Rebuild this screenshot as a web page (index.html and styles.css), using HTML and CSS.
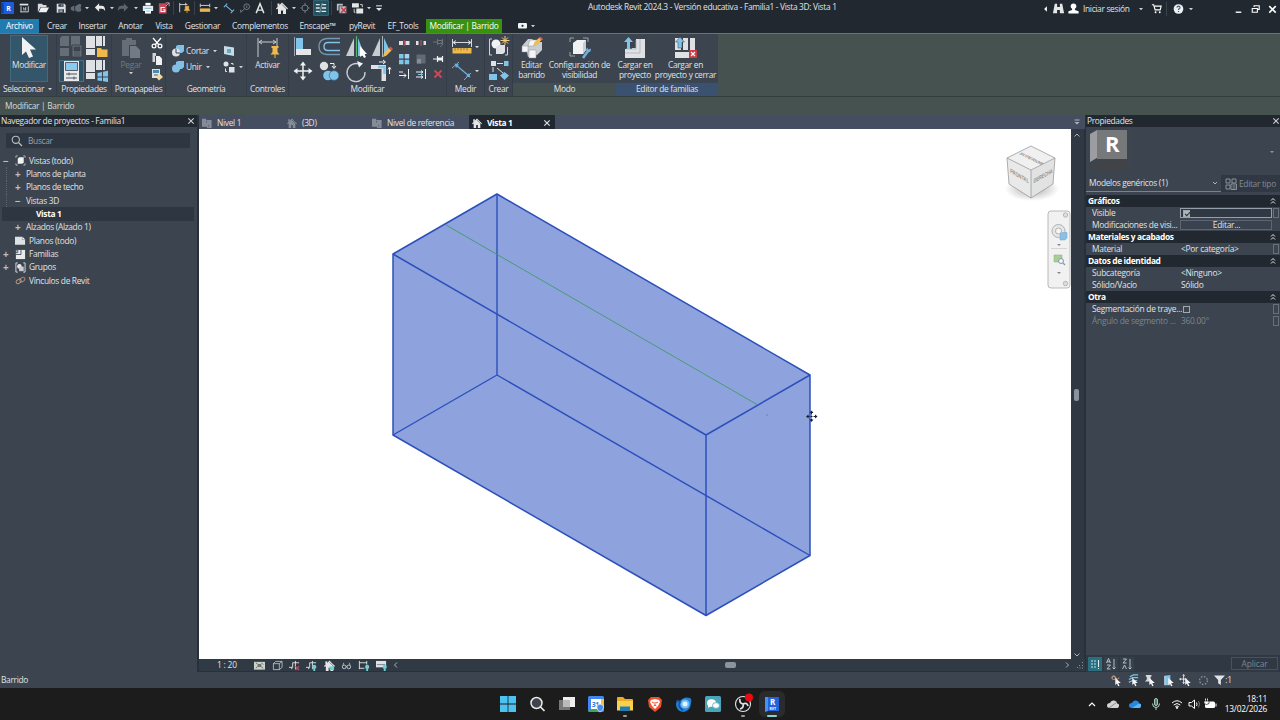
FILE: index.html
```html
<!DOCTYPE html>
<html lang="es">
<head>
    <meta charset="UTF-8">
    <title>Autodesk Revit 2024.3 - Familia1</title>
    <link rel="stylesheet" href="styles.css">
</head>
<body>
    <!-- Símbolos reutilizados -->
    <svg class="defs">
        <symbol id="caret" viewBox="0 0 6 4"><path d="M1 1h4L3 3.3z" fill="currentColor"/></symbol>
        <symbol id="house" viewBox="0 0 12 12"><path d="M0 6.500 6 .5l6 6-1 1-1-1V12H7V8.500H5V12H2V6.500l-1 1z" fill="currentColor"/><path d="M1.500 1.500h2v3h-2z" fill="currentColor"/><path d="M6 2.500l4.500 4.500M8.500 2.500l2 2" stroke="#303844" stroke-width=".6" fill="none"/></symbol>
        <symbol id="plan" viewBox="0 0 12 12"><path d="M0 1h5v1.500h6.500V12H6v-1.500H0z" fill="currentColor"/><path d="M5.500 3v3M8 8v3" stroke="#454d60" stroke-width=".6"/></symbol>
        <symbol id="close" viewBox="0 0 8 8"><path d="M1.300 1.300l5.400 5.400M6.700 1.300 1.300 6.700" stroke="currentColor" stroke-width="1.100"/></symbol>
        <symbol id="cursor" viewBox="0 0 10 14"><path d="M1 0v11l2.600-2.400L5.500 13l2-.9-1.900-4.200H9.500z" fill="#f4f6f8"/></symbol>
        <symbol id="dbl" viewBox="0 0 6 8"><path d="M1 3.500 3 1.500l2 2M1 6.500l2-2 2 2" fill="none" stroke="#e4e7ea"/></symbol>
        <symbol id="cam" viewBox="0 0 12 12"><path d="M1 3V1h2M9 1h2v2M11 9v2H9M3 11H1V9" fill="none" stroke="#cfd4da" stroke-width=".8"/><path d="M3 4l1.500-1.500H9.500V8L8 9.500H3z" fill="#f0f2f4"/></symbol>
    </svg>

    <header class="titlebar">
        <div class="qat">
            <svg viewBox="0 0 14 14"><rect x="-1" y="0" width="15" height="14" rx="1" fill="#1b5ce0"/><path d="M-1 1h3v12h-3z" fill="#0c3fa8"/><text x="5" y="10.500" class="logo-r">R</text></svg>
            <svg viewBox="0 0 14 14"><path d="M2 2h10v2H2z" fill="#e4e6e8"/><path d="M3.500 5v7M3 11.500h9V5M6 7h1v3M9 6v4" fill="none" stroke="#d5d8dc" stroke-width="1.100"/></svg>
            <svg viewBox="0 0 14 14"><path d="M1 12V2h5l1 1.500h4V6H4z" fill="#d8dadd"/><path d="M4.500 6.500H14L11 12H2z" fill="#f0f1f3"/></svg>
            <svg viewBox="0 0 14 14"><path d="M2 2h9l1.500 1.500V12.500H2z" fill="#dddfe2"/><path d="M4 2.500h6v3H4zM4 8.500h6.500v4H4z" fill="#303842"/><path d="M5 9.500h4M5 11h4M8 3v2" stroke="#dddfe2" stroke-width=".8"/></svg>
            <svg viewBox="0 0 14 14" fill="#626a73"><path d="M1 6l4-2v7l-4-2zM6 5l5-3 2 1v3l-3 2v4l-4-2z"/><circle cx="11" cy="9" r="2.300"/></svg>
            <svg class="caret"><use href="#caret"/></svg>
            <svg viewBox="0 0 14 14"><path d="M1 6.500l5-5v3h3q4 0 4 6-1.500-2.500-4-2.500H6v3.500z" fill="#e8eaec"/></svg>
            <svg class="caret"><use href="#caret"/></svg>
            <svg viewBox="0 0 14 14"><path d="M13 6.500 8 1.500v3H5q-4 0-4 6Q2.500 8 5 8h3v3.500z" fill="#5c646c"/></svg>
            <svg class="caret"><use href="#caret"/></svg>
            <svg viewBox="0 0 14 14"><path d="M4 1h6v3H4z" fill="#fff"/><path d="M1 4.500h12v6H1z" fill="#e8ebee"/><path d="M3.500 8h7v5.500h-7z" fill="#fff"/><path d="M3 7.500h8M5 10.500h4" stroke="#6fb2d8"/></svg>
            <svg viewBox="0 0 14 14"><path d="M1 1.500h9v12H1z" fill="#c8495a"/><path d="M9 1h4v4M13 1 9 5" stroke="#e8a0aa" fill="none"/><path d="M8 6.500H3.500v4.500H8V9H6" fill="none" stroke="#fff" stroke-width="1.200"/></svg>
            <i class="sep"></i>
            <svg viewBox="0 0 14 14"><path d="M2 1v11M2 3h9M9 1v3" stroke="#dfe2e5" fill="none"/><path d="M8.500 5h4v3l1 2h-6l1-2zM10.500 10v3" fill="#e8b24c" stroke="#e8b24c" stroke-width=".8"/></svg>
            <i class="sep"></i>
            <svg viewBox="0 0 14 14"><path d="M1.500 2v4M12.500 2v4M2 4h10" stroke="#e4e6e8" fill="none"/><path d="M1 7.500h12v4H1z" fill="#e8b64a"/></svg>
            <svg class="caret"><use href="#caret"/></svg>
            <svg viewBox="0 0 14 14"><path d="M3 4l8 7M1 6l4-4M9 13l4-4" stroke="#79b8dd" fill="none" stroke-width="1.200"/></svg>
            <svg viewBox="0 0 14 14"><circle cx="9" cy="5.500" r="3.300" stroke="#7f868e" fill="none"/><path d="M9 4v3M6.500 8 2 12v-3" stroke="#7f868e" fill="none"/></svg>
            <svg viewBox="0 0 14 14"><path d="M2.500 13 7 2l4.500 11M4 9.500h6" stroke="#e4e6e8" stroke-width="1.700" fill="none"/></svg>
            <i class="sep"></i>
            <svg viewBox="0 0 12 12" class="light"><use href="#house"/></svg>
            <svg class="caret"><use href="#caret"/></svg>
            <svg viewBox="0 0 14 14"><circle cx="7" cy="7" r="3.500" stroke="#7f868e" fill="none"/><path d="M7 1v3M7 10v3M1.500 7h2M10.500 7h2" stroke="#7f868e"/></svg>
            <svg viewBox="0 0 14 14"><rect x="-1.500" y="-1.500" width="17" height="17" fill="#24505e" stroke="#3c8294" stroke-width=".8"/><path d="M1 3h4.500M1 7h4.500M1 11h4.500M8.500 3H13M8 7h5M7.500 11H13" stroke="#e2e8ea" stroke-width="1.500"/><path d="M5.500 13 8.500 1" stroke="#aeb8bd" stroke-width=".8"/></svg>
            <i class="sep"></i>
            <svg viewBox="0 0 14 14"><path d="M1 2h7v2H3v6H1zM4 5h8v8H4z" fill="#b8bdc2"/><path d="M6 6.500l6 6M12 6.500l-6 6" stroke="#c8394a" stroke-width="1.800"/></svg>
            <svg viewBox="0 0 14 14"><path d="M0 1.500h8v5H0zM5 7.500h8v6H5z" fill="#e4e6e8"/><path d="M9.500 3H12v3M2.500 8v4H4" stroke="#e4e6e8" fill="none"/></svg>
            <svg class="caret"><use href="#caret"/></svg>
            <svg viewBox="0 0 14 14"><path d="M3.500 4.500h7" stroke="#e4e6e8" stroke-width="1.200"/><path d="M3.500 7h7L7 10.500z" fill="#e4e6e8"/></svg>
        </div>
        <div class="app-title">Autodesk Revit 2024.3 - Versión educativa - Familia1 - Vista 3D: Vista 1</div>
        <div class="account">
            <svg viewBox="0 0 14 14"><path d="M8.500 4.500v6l-3-3z" fill="#fff"/></svg>
            <svg viewBox="0 0 14 14"><path d="M3 2h2.500v3.500h3V2H11l2 10H8.500V8.500h-3V12H1z" fill="#e4e6e8"/></svg>
            <svg viewBox="0 0 14 14"><circle cx="7" cy="4.500" r="3" fill="#fff"/><path d="M5.500 6h3v2.500l4 1.500v2.500h-11V10l4-1.500z" fill="#fff"/></svg>
            <span>Iniciar sesión</span>
            <svg class="caret"><use href="#caret"/></svg>
            <svg viewBox="0 0 14 14"><path d="M2 3h2l1.500 5.500H11l1-4H5" fill="none" stroke="#fff" stroke-width="1.200"/><circle cx="6" cy="11" r="1" fill="#fff"/><circle cx="10.500" cy="11" r="1" fill="#fff"/></svg>
            <i class="sep"></i>
            <svg viewBox="0 0 14 14"><circle cx="7" cy="7.500" r="5.200" fill="#eef1f4"/><path d="M5.300 6q.2-1.500 1.700-1.500T8.700 5.900q0 1-1.700 2v.8M7 9.800v1.100" stroke="#2f5a85" fill="none" stroke-width="1.200"/></svg>
            <svg class="caret"><use href="#caret"/></svg>
            <svg class="minimize" viewBox="0 0 14 14"><path d="M4 11h6" stroke="#fff" stroke-width="1.500"/></svg>
            <svg viewBox="0 0 14 14"><path d="M5.500 5.500V4H11v4H9.500M3.500 7H9v4H3.500z" stroke="#fff" fill="none" stroke-width="1.200"/></svg>
            <svg viewBox="0 0 14 14"><path d="M3.500 4.500l7 7M10.500 4.500l-7 7" stroke="#fff" stroke-width="1.700"/></svg>
        </div>
    </header>

    <nav class="tabs">
        <span class="tab file">Archivo</span>
        <span class="tab t-crear">Crear</span>
        <span class="tab t-insertar">Insertar</span>
        <span class="tab t-anotar">Anotar</span>
        <span class="tab t-vista">Vista</span>
        <span class="tab t-gestionar">Gestionar</span>
        <span class="tab t-comp">Complementos</span>
        <span class="tab t-enscape">Enscape™</span>
        <span class="tab t-pyrevit">pyRevit</span>
        <span class="tab t-eftools">EF_Tools</span>
        <span class="tab context">Modificar | Barrido</span>
        <span class="tab-toggle">
            <svg width="9" height="6"><rect width="9" height="5.500" rx="1" fill="#f0f2f4"/><circle cx="4.500" cy="2.800" r="1.100" fill="#212830"/></svg>
            <svg class="caret"><use href="#caret"/></svg>
        </span>
    </nav>

    <section class="ribbon">
        <div class="panel p-select">
            <div class="panel-body">
                <div class="big-btn active">
                    <svg width="14" height="22" viewBox="0 0 14 22"><path d="M0 0v18l4-3.500L7 21l4-1.500-3-7h6z" fill="#f0f2f4"/></svg>
                    <span>Modificar</span>
                </div>
            </div>
            <div class="caption">Seleccionar <svg class="caret"><use href="#caret"/></svg></div>
        </div>
        <div class="panel p-props">
            <div class="panel-body grid-2">
                <svg width="22" height="22" viewBox="0 0 22 22" fill="#656d76"><path d="M0 2l2-2h7v10H0zM11 0h9v10h-9zM0 12h9v8H0z"/><path d="M12 9h10v12H12z" stroke="#3b444f"/><path d="M14 11h6v4h-6zM14 17h6M14 19h6" fill="#3b444f" stroke="#3b444f" stroke-width=".7"/></svg>
                <svg width="22" height="22" viewBox="0 0 22 22"><path d="M0 0h9v12H0zM10 0h6v10h-6zM17 0h2v10h-2zM0 13h9v6H0z" fill="#dfe1e4"/><path d="M11 12h4l1 1.500h5.500V21H11z" fill="#f2b84c"/></svg>
                <svg width="25" height="22" viewBox="0 0 25 22"><rect x=".5" y=".5" width="24" height="21" fill="#2d5265" stroke="#477085"/><path d="M5 1h15v20H5z" fill="#e8eaec"/><path d="M6.500 2.500h12v8h-12z" fill="#8bcbee" stroke="#56606b"/><path d="M7 14h11M7 18h11M10 12.500v3M15 16.500v3" stroke="#4c545e"/></svg>
                <svg width="22" height="22" viewBox="0 0 22 22"><path d="M0 0h9v12H0zM10 0h6v10h-6zM17 0h2v10h-2zM0 13h9v6H0z" fill="#dfe1e4"/><path d="M11.500 13l4.500-1v4.500h-4.500zM17 11.800l5-1v5.700h-5zM11.500 17.500H16V21l-4.500-.5zM17 17.500h5V22l-5-.8z" fill="#7fc4ea"/></svg>
            </div>
            <div class="caption">Propiedades</div>
        </div>
        <div class="panel p-clip">
            <div class="panel-body">
                <div class="big-btn disabled">
                    <svg width="20" height="22" viewBox="0 0 20 22"><path d="M1 3h4V1h6v2h4v5H8v11H1z" fill="#666d76"/><path d="M9 9h6l4 4v8H9z" fill="#727a83"/></svg>
                    <span>Pegar</span>
                    <svg class="caret"><use href="#caret"/></svg>
                </div>
                <div class="stack-3">
                    <svg width="12" height="12" viewBox="0 0 12 12"><path d="M2 1l6 7M10 1 4 8" stroke="#fff" stroke-width="1.300"/><circle cx="3" cy="9" r="1.900" fill="none" stroke="#fff" stroke-width="1.200"/><circle cx="9" cy="9" r="1.900" fill="none" stroke="#fff" stroke-width="1.200"/></svg>
                    <svg width="12" height="12" viewBox="0 0 12 12"><path d="M1.500 0H5v3H4v6H1.500z" fill="#cfd3d7"/><path d="M5 3h3.500L11 5.500V12H5z" fill="#f0f2f4"/></svg>
                    <svg width="12" height="12" viewBox="0 0 12 12"><path d="M1 0h8v9H1z" fill="#dfe2e5"/><path d="M2 1h6v3H2z" fill="#4f8aaa"/><path d="M3 6h4" stroke="#58616b"/><path d="M5 8l4-3 3 3-4 3.500z" fill="#f0d89a"/></svg>
                </div>
            </div>
            <div class="caption">Portapapeles</div>
        </div>
        <div class="panel p-geo">
            <div class="panel-body geo">
                <svg width="12" height="12" viewBox="0 0 12 12"><path d="M4 1l2-1h6v6l-2 2H4z" fill="#82c0e6"/><circle cx="4" cy="7.500" r="4" fill="#dfe2e5"/><path d="M4 4v4h4" stroke="#3b444f" fill="none"/></svg>
                <span>Cortar</span>
                <svg class="caret"><use href="#caret"/></svg>
                <svg width="12" height="12" viewBox="0 0 12 12"><path d="M1 1l10 1.500V11L1 9z" fill="#c8dbe3"/><path d="M4 4h4v4H4z" fill="#67a6c6"/></svg>
                <svg width="12" height="12" viewBox="0 0 12 12"><path d="M4 1l2-1h6v6l-2 2H4z" fill="#82c0e6"/><circle cx="4" cy="7.500" r="4" fill="#82c0e6"/></svg>
                <span>Unir</span>
                <svg class="caret unir-caret"><use href="#caret"/></svg>
                <div class="pair"><svg width="12" height="12" viewBox="0 0 12 12"><circle cx="3" cy="3" r="2.500" fill="#dfe2e5"/><path d="M6 6h5.500v5.500H6z" fill="#dfe2e5"/><path d="M2.500 7.500v3H4M8 2.500h2V4" fill="none" stroke="#dfe2e5"/></svg><svg class="caret"><use href="#caret"/></svg></div>
            </div>
            <div class="caption">Geometría</div>
        </div>
        <div class="panel p-ctrl">
            <div class="panel-body">
                <div class="big-btn">
                    <svg width="22" height="22" viewBox="0 0 22 22"><path d="M1 1v19M20 1v8M2 5h17M5 3 2 5l3 2M16 3l3 2-3 2" stroke="#c8ccd1" fill="none"/><path d="M14.500 9h7v2h-1v4l2 2.500h-9l2-2.500v-4h-1zM17.500 17h1v4h-1z" fill="#f0b94c"/></svg>
                    <span>Activar</span>
                </div>
            </div>
            <div class="caption">Controles</div>
        </div>
        <div class="panel p-modify">
            <div class="panel-body">
                <div class="mod-big">
                    <svg width="22" height="22" viewBox="0 0 22 22"><path d="M4 2h7v11H4z" fill="#7fc4ea"/><path d="M4 13h15v6H4z" fill="#e4e6e8"/><path d="M2.500 1v19" stroke="#9aa2aa"/></svg>
                    <svg width="22" height="22" viewBox="0 0 22 22" fill="none"><path d="M22 2.500H9Q1 3 1 10.500t8 8h13" stroke="#7897ac" stroke-width="1.300"/><path d="M22 6.500H10q-4 0-4 4t4 4h12" stroke="#7fc4ea" stroke-width="1.400"/></svg>
                    <svg width="22" height="22" viewBox="0 0 22 22"><path d="M9 2v18H1z" fill="#c9cdd1"/><path d="M11.500 0v21" stroke="#55b36a" stroke-width="1.200"/><path d="M13 2l7 18h-7z" fill="#7fc4ea"/><path d="M15 10v11l2.500-2 1.500 3 2-1-1.500-3H22z" fill="#fff"/></svg>
                    <svg width="22" height="22" viewBox="0 0 22 22"><path d="M9 2v18H1z" fill="#c9cdd1"/><path d="M11.500 0v21" stroke="#aeb6bd"/><path d="M13 2l6 13-6 5z" fill="#7fc4ea"/><path d="M12 21l1-4 5-5 2.500 2.500-5 5z" fill="#f0bd55"/><path d="M18 12l2.500 2.500L22 13l-2.500-2.500z" fill="#d8545c"/></svg>
                    <svg width="22" height="22" viewBox="0 0 22 22"><path d="M11 4v14M4 11h14" stroke="#f0f2f4" stroke-width="1.500"/><path d="M11 1.500l3 4H8zM11 20.500l3-4H8zM1.500 11l4-3v6zM20.500 11l-4-3v6z" fill="#f0f2f4"/></svg>
                    <svg width="22" height="22" viewBox="0 0 22 22"><circle cx="6" cy="6" r="4.200" fill="#dfe1e4"/><circle cx="10" cy="15.500" r="4.800" fill="#7fc4ea"/><circle cx="16" cy="15.500" r="4.800" fill="#7fc4ea" stroke="#3b6f90" stroke-width=".7"/><path d="M12 3.500h4V8M14 6l2 2.500L18 6" fill="none" stroke="#f0f2f4"/></svg>
                    <svg width="22" height="22" viewBox="0 0 22 22"><path d="M15 4.500A9 9 0 1 0 20 12" fill="none" stroke="#c9cfd5" stroke-width="1.300"/><path d="M12 1l6 2.500-4 4z" fill="#f0f2f4"/></svg>
                    <svg width="22" height="22" viewBox="0 0 22 22"><path d="M0 5h15v16h-4.500V9H0z" fill="#dfe1e4"/><path d="M7 7h6.500v7" fill="none" stroke="#7fc4ea" stroke-width="2.500"/><path d="M8 2h6M12 0l2.500 2L12 4M18.500 14V8M17 9.500 18.500 7 20 9.500" stroke="#f0f2f4" fill="none"/></svg>
                </div>
                <div class="mod-small">
                    <svg viewBox="0 0 12 12"><path d="M1 4h4v4H1zM7.500 4h4v4h-4z" fill="#dfe1e4"/><path d="M6.200 3v6" stroke="#d05060"/></svg>
                    <svg viewBox="0 0 12 12"><path d="M1 4h2.500v4H1zM8.500 4H11v4H8.500z" fill="#dfe1e4"/><path d="M6 3v6" stroke="#d05060"/></svg>
                    <svg viewBox="0 0 12 12"><path d="M1 5h4M5.500 2v6M6 3.500h4v3H6M10.500 2v6M8 10l3-3" stroke="#6b737c" fill="none"/></svg>
                    <svg viewBox="0 0 12 12"><path d="M1 1h4.500v4.500H1zM1 6.700h4.500v4.500H1zM6.700 6.700h4.500v4.500H6.700z" fill="#7fc4ea"/><path d="M6.700 1h4.500v4.500H6.700z" fill="#a6d4ee"/></svg>
                    <svg viewBox="0 0 12 12"><path d="M1.500 1.500h9v9h-9z" fill="#626a73"/><path d="M2 6h4v4.500H2z" fill="#858c94"/></svg>
                    <svg viewBox="0 0 12 12"><path d="M1 6h4M5.500 3v6M10.500 3v6" stroke="#f0f2f4" fill="none" stroke-width="1.200"/><path d="M6 4.500h4v3H6z" fill="#f0f2f4"/></svg>
                    <svg viewBox="0 0 12 12"><path d="M1 7.500h7M6 5.500l2 2-2 2M10.500 1v10M1 4h4" stroke="#f0f2f4" fill="none"/></svg>
                    <svg viewBox="0 0 12 12"><path d="M1 4h7M1 9h7M6 2.500 8 4 6 5.500M6 7.500 8 9l-2 1.500M10.500 1v10" stroke="#f0f2f4" fill="none"/><path d="M3 6.500h5" stroke="#7fc4ea"/></svg>
                    <svg viewBox="0 0 12 12"><path d="M2.500 2.500l7 7M9.500 2.500l-7 7" stroke="#d04858" stroke-width="1.800"/></svg>
                </div>
            </div>
            <div class="caption">Modificar</div>
        </div>
        <div class="panel p-measure">
            <div class="panel-body measure">
                <svg width="20" height="20" viewBox="0 0 20 20"><path d="M.5 2v8M19.500 2v8M1 5.500h18M4 3.500l-3 2 3 2M16 3.500l3 2-3 2" stroke="#d5d9dd" fill="none"/><path d="M.5 11h19v5.500H.5z" fill="#f0b94c"/><path d="M3 11v2.500M6 11v2M9 11v2.500M12 11v2M15 11v2.500" stroke="#6e5a33" stroke-width=".7"/></svg>
                <svg class="caret"><use href="#caret"/></svg>
                <svg width="20" height="20" viewBox="0 0 20 20"><path d="M4 4l13 11" stroke="#6fb2e0" stroke-width="1.200"/><path d="M0 7l7-6M12 19l7-7" stroke="#9aa6b1"/><path d="M2.500 2.500l4.500 1-3 3.500zM18.500 16.500l-4.500-1 3-3.500z" fill="#6fb2e0"/></svg>
                <svg class="caret"><use href="#caret"/></svg>
            </div>
            <div class="caption">Medir</div>
        </div>
        <div class="panel p-create">
            <div class="panel-body col">
                <svg width="22" height="22" viewBox="0 0 22 22"><path d="M4 3H1.500v16H4M19.500 11v8H17" fill="none" stroke="#cfd3d7"/><circle cx="8" cy="8" r="4.500" fill="#f0f2f4"/><path d="M8 11l3-2h6v7l-2 2H8z" fill="#dfe1e4"/><path d="M17 0v9M12.500 4.500h9M14 1.500l6 6M20 1.500l-6 6" stroke="#f3d080"/></svg>
                <svg width="22" height="22" viewBox="0 0 22 22"><path d="M3 1h5v5H3z" fill="#dfe1e4"/><path d="M9 3.500h6M5 7v5M9 8l6 5" stroke="#dfe1e4"/><path d="M16 1h4.500v5H16zM1 14h8v6H1zM12 15.500l4.500-3.500L21 15.500 16.500 20z" fill="#7fc4ea"/></svg>
            </div>
            <div class="caption">Crear</div>
        </div>
        <div class="panel p-mode">
            <div class="panel-body">
                <div class="big-btn b-edit">
                    <svg width="22" height="22" viewBox="0 0 22 22"><path d="M1 9l6-7h5L7 9h6l4-4h4v8l-5 5-9 2-1-5H1z" fill="#c9cdd1"/><path d="M1 9h6v6H1zM8 13h7v8H8zM9 3h9v3l-5 3H7z" fill="#f4f5f6" stroke="#8c9298" stroke-width=".5"/><path d="M12 9l1.500-4L19 0l2.500 2L16 7.500z" fill="#f0bd55"/><path d="M18 1l2-1 2 2-1 1.500z" fill="#d8545c"/></svg>
                    <span>Editar<br>barrido</span>
                </div>
                <div class="big-btn b-vis">
                    <svg width="22" height="22" viewBox="0 0 22 22"><path d="M1 5V1h4M14 1h5v4M1 15v4h5" fill="none" stroke="#9ba3ab"/><path d="M4 6l4-3h9v10l-3 4H4z" fill="#f0f1f3"/><path d="M14 6l3-3v10l-3 4z" fill="#c9cdd1"/><path d="M14 21l5-7" stroke="#6fb2e0" stroke-width="2.500"/><path d="M17 13l1-2.500 1.500 2 2.500-1-.5 3-2.500 1z" fill="#6fb2e0"/></svg>
                    <span>Configuración de<br>visibilidad</span>
                </div>
            </div>
            <div class="caption">Modo</div>
        </div>
        <div class="panel p-family">
            <div class="panel-body">
                <div class="big-btn b-load">
                    <svg width="22" height="22" viewBox="0 0 22 22"><path d="M1 12v9h20V2h-9v9H8v1z" fill="#dfe1e4"/><path d="M12 3v9H2M16 2v14H1" fill="none" stroke="#aab0b6" stroke-width=".8"/><path d="M4.500 0 9 5H6v7H3V5H0z" fill="#7fc4ea"/></svg>
                    <span>Cargar en<br>proyecto</span>
                </div>
                <div class="big-btn b-loadclose">
                    <svg width="22" height="22" viewBox="0 0 22 22"><path d="M0 1h6v12H0zM8 1h5v12H8zM15 1h5v12h-5zM0 15h14v6H0z" fill="#dfe1e4"/><path d="M5 0l4.500 5H7v6H3V5H.5z" fill="#7fc4ea" stroke="#3b444f" stroke-width=".5"/><path d="M14 13h8v8h-8z" fill="#cc3a42"/><path d="M16 15l4 4M20 15l-4 4" stroke="#fff" stroke-width="1.200"/></svg>
                    <span>Cargar en<br>proyecto y cerrar</span>
                </div>
            </div>
            <div class="caption">Editor de familias</div>
        </div>
    </section>

    <div class="options-bar">Modificar | Barrido</div>

    <main class="workspace">
        <aside class="browser">
            <div class="dock-title">Navegador de proyectos - Familia1 <svg class="x"><use href="#close"/></svg></div>
            <div class="search">
                <svg width="12" height="12" viewBox="0 0 12 12"><circle cx="4.800" cy="4.800" r="3.600" fill="none" stroke="#b8bec5" stroke-width="1.100"/><path d="M7.500 7.500l3.500 3.500" stroke="#b8bec5" stroke-width="1.200"/></svg>
                <span>Buscar</span>
            </div>
            <ul class="tree">
                <li><i class="tw">−</i><svg class="ti"><use href="#cam"/></svg>Vistas (todo)</li>
                <li class="l2"><i class="tw">+</i>Planos de planta</li>
                <li class="l2"><i class="tw">+</i>Planos de techo</li>
                <li class="l2"><i class="tw">−</i>Vistas 3D</li>
                <li class="l3 selected">Vista 1</li>
                <li class="l2 last"><i class="tw">+</i>Alzados (Alzado 1)</li>
                <li><i class="tw"></i><svg class="ti" viewBox="0 0 12 12"><path d="M0 2h8l3 3v5.500H0z" fill="#dfe2e5"/><path d="M8 2v3h3" fill="#fff" stroke="#6a727b" stroke-width=".6"/></svg>Planos (todo)</li>
                <li><i class="tw">+</i><svg class="ti" viewBox="0 0 12 12"><path d="M1 1h10v10H1z" fill="#e8eaec"/><path d="M6.500 1v5H1M1 1h2v3H1z" fill="none" stroke="#4a535e"/></svg>Familias</li>
                <li><i class="tw">+</i><svg class="ti" viewBox="0 0 12 12"><path d="M3 1H1v10h2M9 1h2v10H9" fill="none" stroke="#dfe2e5"/><circle cx="4.800" cy="4.800" r="2.500" fill="#e8eaec"/><path d="M4.500 5h5v5h-5z" fill="#c9ced3"/></svg>Grupos</li>
                <li><i class="tw"></i><svg class="ti" viewBox="0 0 12 12"><rect x="1" y="5" width="6" height="4" rx="2" transform="rotate(-35 4 7)" fill="none" stroke="#c8a184"/><rect x="5" y="3" width="6" height="4" rx="2" transform="rotate(-35 8 5)" fill="none" stroke="#b98c70"/></svg>Vínculos de Revit</li>
            </ul>
        </aside>

        <section class="view">
            <div class="view-tabs">
                <div class="vtab v1"><svg><use href="#plan"/></svg>Nivel 1</div>
                <div class="vtab v2"><svg><use href="#house"/></svg>(3D)</div>
                <div class="vtab v3"><svg><use href="#plan"/></svg>Nivel de referencia</div>
                <div class="vtab v4 on"><svg><use href="#house"/></svg>Vista 1 <svg class="x"><use href="#close"/></svg></div>
                <svg class="tabs-menu" width="8" height="8" viewBox="0 0 8 8"><path d="M1.500 2h5" stroke="#aeb4bf"/><path d="M1.500 4h5L4 6.500z" fill="#aeb4bf"/></svg>
            </div>
            <div class="view-main">
                <div class="canvas">
                    <!-- Sólido del barrido -->
                    <svg class="model" viewBox="199 130 872 529">
                        <path d="M497 194 810 375V555.500L706 615.500 393 435V254z" fill="#8ea2de"/>
                        <g fill="none" stroke="#2c50bb" stroke-width="1.500" stroke-linejoin="round">
                            <path d="M497 194 810 375V555.500L706 615.500 393 435V254z"/>
                            <path d="M393 254 706 435 810 375M706 435V615.500"/>
                            <path d="M497 194V375L393 435M497 375 810 555.500" stroke-width="1.400"/>
                        </g>
                        <path d="M446 225 757 404.500" stroke="#3f9b68" stroke-width=".9"/>
                        <path d="M766 415h2" stroke="#5672c8" stroke-width=".7"/>
                        <g stroke="#15213f" stroke-width="1.100" fill="#15213f"><path d="M811.500 412.500v8M807.500 416.500h8" stroke-dasharray="2 1"/><path d="M811.500 410.500l2 2.500h-4zM811.500 422l2-2.500h-4zM806 416.500l2.500-2v4zM817.500 416.500l-2.500-2v4z" stroke="none"/></g>
                    </svg>
                    <svg class="viewcube" width="60" height="62" viewBox="0 0 60 62">
                        <defs><radialGradient id="sh"><stop offset="0" stop-color="#aaa"/><stop offset="1" stop-color="#fff"/></radialGradient></defs>
                        <ellipse cx="31" cy="48" rx="27" ry="12" fill="url(#sh)"/>
                        <path d="M30 5 54 17 30 29 6 17z" fill="#f0f0f0"/>
                        <path d="M6 17 30 29V57L8 43z" fill="#e9e9e9"/>
                        <path d="M54 17 30 29V57L52 43z" fill="#e2e2e2"/>
                        <path d="M30 5 54 17 52 43 30 57 8 43 6 17zM6 17 30 29 54 17M30 29V57" fill="none" stroke="#9b9b9b" stroke-width=".8"/>
                        <text transform="matrix(.78 .39 -.75 .45 29 18.500)" class="cube-text">SUPERIOR</text>
                        <text transform="matrix(.72 .42 0 1.100 18.500 37)" class="cube-text">FRONTAL</text>
                        <text transform="matrix(.7 -.39 0 1.100 42 37)" class="cube-text">DERECHA</text>
                    </svg>
                    <svg class="navbar" width="24" height="80" viewBox="0 0 24 80">
                        <rect x="1" y="1" width="22" height="77" rx="3" fill="#f1f1f1" stroke="#b9b9b9"/>
                        <circle cx="18.500" cy="5" r="2.200" fill="#ddd" stroke="#aaa" stroke-width=".8"/>
                        <circle cx="18.500" cy="73.500" r="2.200" fill="#ddd" stroke="#aaa" stroke-width=".8"/>
                        <circle cx="11.500" cy="21" r="6.500" fill="#e6e6e6" stroke="#aeb2b6"/><circle cx="11.500" cy="21" r="3" fill="#f6f6f6" stroke="#aeb2b6"/>
                        <path d="M13 24l2-1.500h5V28l-2 2h-5z" fill="#8dbfe4" stroke="#6fa5cf" stroke-width=".5"/>
                        <path d="M10 34h4l-2 2zM10 62h4l-2 2z" fill="#888"/><path d="M4 38.500h16" stroke="#d5d5d5"/>
                        <path d="M7 45h8v7H7z" fill="#a5cf95" stroke="#84b374" stroke-width=".5"/><circle cx="14" cy="51" r="2.500" fill="#eef5fa" stroke="#8499ab"/><path d="M16 53l2 2" stroke="#8499ab" stroke-width="1.200"/>
                    </svg>
                </div>
                <div class="vscroll">
                    <svg width="8" height="6"><path d="M1.500 4.500 4 2l2.500 2.500" stroke="#aab2bb" fill="none"/></svg>
                    <i class="thumb"></i>
                    <svg width="8" height="6"><path d="M1.500 1.500 4 4l2.500-2.500" stroke="#aab2bb" fill="none"/></svg>
                </div>
            </div>
            <div class="view-bar">
                <span class="scale">1 : 20</span>
                <div class="vb-icons">
                    <svg viewBox="0 0 12 12"><path d="M0 2h12v8.500H0z" fill="#cbd0c9"/><path d="M2 3l2 1.500M8 3l2 2M2 9l2-2M10 9 8 7.500M4.500 5h3v2h-3z" stroke="#5b645f" fill="#808a83"/></svg>
                    <svg viewBox="0 0 12 12"><path d="M1.500 4h6.500v6.500H1.500zM1.500 4 4 1.500h7v6.500L8 10.500M8 4l3-2.500" fill="none" stroke="#d0d5da" stroke-width=".8"/></svg>
                    <svg viewBox="0 0 12 12"><path d="M0 8h4V3h7M7 1v9M3 10V8" fill="none" stroke="#dfe2e5"/><path d="M7 7l4 4M11 7l-4 4" stroke="#d04858" stroke-width="1.400"/></svg>
                    <svg viewBox="0 0 12 12"><path d="M0 8h4V3h7M7 1v9M3 10V8" fill="none" stroke="#dfe2e5"/><circle cx="9" cy="7.500" r="2.300" fill="#6fd0d4"/><path d="M8 9h2v3H8z" fill="#6fd0d4"/></svg>
                    <svg viewBox="0 0 12 12" class="light"><use href="#house"/><path d="M6 7h5v4H6z" fill="#6fd0d4"/></svg>
                    <svg viewBox="0 0 12 12"><circle cx="3.500" cy="7.500" r="2" fill="none" stroke="#c4cad0"/><circle cx="8.500" cy="7.500" r="2" fill="none" stroke="#c4cad0"/><path d="M2 6l1-3M10 6 9 3M5.500 7h1" stroke="#c4cad0" stroke-width=".8"/></svg>
                    <svg viewBox="0 0 12 12"><path d="M1.500 1v9M1.500 3h8M9.500 1v4M1 9h6" fill="none" stroke="#dfe2e5"/><circle cx="10" cy="7.500" r="2.300" fill="#6fd0d4"/><path d="M9 9h2v3H9z" fill="#6fd0d4"/></svg>
                    <svg viewBox="0 0 12 12"><path d="M0 1h11v7H0z" fill="#dfe2e5"/><path d="M1 5h9" stroke="#77808a"/><circle cx="9.500" cy="7.500" r="2.300" fill="#6fd0d4"/><path d="M8.500 9h2v3h-2z" fill="#6fd0d4"/></svg>
                </div>
                <svg class="arr first" width="6" height="8"><path d="M4 1.500 1.500 4 4 6.500" stroke="#aab2bb" fill="none"/></svg>
                <i class="hthumb"></i>
                <svg class="arr" width="6" height="8"><path d="M2 1.500 4.500 4 2 6.500" stroke="#aab2bb" fill="none"/></svg>
                <svg class="grip" width="8" height="8" fill="#8a929b"><path d="M5 1h1v1H5zM2 4h1v1H2zM5 4h1v1H5zM0 6h1v1H0zM2.500 6.500h1v1h-1zM5 6.500h1v1H5z"/></svg>
            </div>
        </section>

        <aside class="props">
            <div class="dock-title">Propiedades <svg class="x"><use href="#close"/></svg></div>
            <div class="type-box">
                <svg width="42" height="44" viewBox="0 0 42 44"><path d="M6 0h35v42H1V30z" fill="#404347"/><path d="M0 4l7-4v28l-7 5z" fill="#9b9da0"/><path d="M7 0h30v29H7z" fill="#76787a"/><path d="M37 0h4v42h-4z" fill="#3d454e"/><path d="M0 32l7-4v3l-6 4v7H0z" fill="#3b444f"/><text x="15" y="22" class="type-r">R</text></svg>
                <svg class="caret"><use href="#caret"/></svg>
            </div>
            <div class="type-row">
                <div class="type-select">Modelos genéricos (1) <svg class="chev" width="6" height="6"><path d="M1 2l2 2 2-2" stroke="#aab2bb" fill="none"/></svg></div>
                <div class="type-edit"><svg width="12" height="12" viewBox="0 0 12 12" fill="none" stroke="#8a929b"><path d="M1 1h4v4H1zM7 1h4v4H7zM1 7h4v4H1zM6 6h5.500v5.500H6zM7.500 8h3M7.500 10h3"/></svg>Editar tipo</div>
            </div>
            <div class="prop-list">
                <div class="group">Gráficos <svg><use href="#dbl"/></svg></div>
                <div class="row"><span>Visible</span><span class="field box"><i class="chk on"></i></span><i class="assoc"></i></div>
                <div class="row"><span>Modificaciones de visi...</span><span class="field btn">Editar...</span><i class="none"></i></div>
                <div class="group">Materiales y acabados <svg><use href="#dbl"/></svg></div>
                <div class="row"><span>Material</span><span class="field">&lt;Por categoría&gt;</span><i class="assoc"></i></div>
                <div class="group">Datos de identidad <svg><use href="#dbl"/></svg></div>
                <div class="row"><span>Subcategoría</span><span class="field">&lt;Ninguno&gt;</span><i class="none"></i></div>
                <div class="row"><span>Sólido/Vacío</span><span class="field">Sólido</span><i class="none"></i></div>
                <div class="group">Otra <svg><use href="#dbl"/></svg></div>
                <div class="row"><span>Segmentación de traye...</span><span class="field"><i class="chk"></i></span><i class="assoc"></i></div>
                <div class="row off"><span>Ángulo de segmento ...</span><span class="field">360.00°</span><i class="assoc"></i></div>
            </div>
            <div class="props-foot">
                <svg class="on" viewBox="0 0 14 14"><path d="M3 4h5M3 7h5M3 10h5" stroke="#bfe6ea" stroke-dasharray="2 1"/><path d="M10.500 3v7M10.500 11v1" stroke="#dff3f5"/></svg>
                <svg viewBox="0 0 14 14" fill="none" stroke="#c4cad0" stroke-width=".9"><path d="M2.500 6 4.500 1.500 6.500 6M3 4.800h3M3 8h3.500L3 12h3.500M10 2v10M8.500 10.500 10 12l1.500-1.500"/></svg>
                <svg viewBox="0 0 14 14" fill="none" stroke="#c4cad0" stroke-width=".9"><path d="M2.500 12 4.500 8l2 4M3 2h3.500L3 6h3.500M10 2v10M8.500 10.500 10 12l1.500-1.500"/></svg>
                <span class="apply">Aplicar</span>
            </div>
        </aside>
    </main>

    <footer class="status">
        <span>Barrido</span>
        <div class="sel-tools">
            <svg viewBox="0 0 14 14"><path d="M2 4q2-3 4 0t4 0" fill="none" stroke="#c8a184"/><circle cx="4" cy="4" r="2" fill="none" stroke="#c8a184"/><svg x="5" y="4" width="7" height="10"><use href="#cursor"/></svg></svg>
            <svg viewBox="0 0 14 14"><path d="M2 6l4-2h6M2 9l4-2h5M3 3l4-2h5" stroke="#7fc4ea" stroke-width="1.300" fill="none"/><svg x="5" y="4" width="7" height="10"><use href="#cursor"/></svg></svg>
            <svg viewBox="0 0 14 14"><path d="M2 1h6v2H7v3l2 2H1l2-2V3H2z" fill="#d5d9dd"/><svg x="5" y="4" width="7" height="10"><use href="#cursor"/></svg></svg>
            <svg viewBox="0 0 14 14"><path d="M3 2l6-1v11H3z" fill="#7fc4ea"/><path d="M3 2v10" stroke="#dceaf2"/><svg x="6" y="4" width="7" height="10"><use href="#cursor"/></svg></svg>
            <svg viewBox="0 0 14 14"><path d="M5 2v7M2 5.500h6" stroke="#f0f2f4"/><path d="M5 0l1.500 2h-3zM5 11l1.500-2h-3zM0 5.500 2 4v3z" fill="#f0f2f4"/><svg x="6" y="4" width="7" height="10"><use href="#cursor"/></svg></svg>
            <svg viewBox="0 0 14 14"><circle cx="7" cy="7" r="4.200" fill="none" stroke="#8f979f" stroke-width="1.400" stroke-dasharray="1.600 1.700"/></svg>
            <div class="filter"><svg viewBox="0 0 12 12" width="11" height="12"><path d="M0 1h12L7.500 6v5.500l-3-2V6z" fill="#dfe3e7"/></svg>:1</div>
        </div>
    </footer>

    <div class="taskbar">
        <div class="apps">
            <svg viewBox="0 0 16 16"><path d="M0 0h7.600v7.600H0zM8.400 0H16v7.600H8.400zM0 8.400h7.600V16H0zM8.400 8.400H16V16H8.400z" fill="#4cc2f1"/></svg>
            <svg viewBox="0 0 16 16"><circle cx="7.500" cy="7" r="5.500" fill="#3f444a" stroke="#e8eaec" stroke-width="1.500"/><path d="M11.500 11l4 4" stroke="#e8eaec" stroke-width="1.700"/></svg>
            <svg viewBox="0 0 16 16"><path d="M0 4h11v10H0z" fill="#777"/><path d="M4 1h12v10H4z" fill="#eceded"/><path d="M4 4h7v7H4z" fill="#bbb"/></svg>
            <svg viewBox="0 0 16 16"><rect width="16" height="16" rx="1.500" fill="#4285f4"/><path d="M3 3h10v10H3z" fill="#fff"/><path d="M13 3h3v8h-3z" fill="#f4bf35"/><path d="M0 13h10v3H1z" fill="#44a45a"/><text x="3.700" y="10.500" class="cal">31</text><path d="M9 9.500l3-1.500 3.500 1.500V12q-1 3-3.500 4-2.500-1-3-4z" fill="#4e8bea" stroke="#dcebff" stroke-width=".8"/></svg>
            <div class="app run"><svg viewBox="0 0 16 16"><path d="M0 2q0-1 1-1h5l2 2h7q1 0 1 1v10H0z" fill="#e9ac22"/><path d="M0 5h16v9.500H0z" fill="#fbd04f"/><path d="M3 10.500h10V15H3z" fill="#1e7eb5"/></svg></div>
            <svg viewBox="0 0 16 16"><path d="M4 1h8l3 3-1 7-6 5-6-5-1-7z" fill="#ef4f2d"/><path d="M4 4l4-1 4 1 1 2-2 4-3 3-3-3-2-4z" fill="#fff"/><path d="M5 6l2 1M11 6 9 7M8 6v4M6.500 10 8 9l1.500 1" stroke="#ef4f2d" fill="none"/></svg>
            <svg viewBox="0 0 16 16"><path d="M1 4l3 1Q8 0 14 2q2 1 1 5-.5 8-7.500 9Q0 15 0 8z" fill="#2180d8"/><circle cx="9" cy="8" r="4.500" fill="#71bdf3"/><circle cx="9" cy="8" r="2.500" fill="#e4f3fd"/><path d="M1 4q1 2 3 2-3 5 3 8" stroke="#1450a0" fill="none" stroke-width="1.500"/></svg>
            <svg viewBox="0 0 16 16"><rect width="16" height="16" rx="1.500" fill="#4aa5b8"/><ellipse cx="6.500" cy="7" rx="4.500" ry="3.700" fill="#fff"/><path d="M3 9v3l3-2z" fill="#fff"/><ellipse cx="11" cy="9.500" rx="3.500" ry="2.900" fill="#fff" stroke="#4aa5b8" stroke-width=".8"/></svg>
            <div class="app run"><svg viewBox="0 0 16 16"><circle cx="8" cy="8" r="7.500" fill="#17181a" stroke="#e4e6e8" stroke-width="1.100"/><path d="M8 8q-4-1-3-5M8 8q4-2 5 2M8 8q1 4-3 5" stroke="#dfe1e3" stroke-width="1.700" fill="none"/><circle cx="14" cy="1.500" r="4" fill="#e80c12"/></svg></div>
            <div class="app run focus"><svg viewBox="0 0 16 16"><path d="M1 1h14v14H1z" fill="#2462dc"/><path d="M1 1h3v14l-3 1z" fill="#4790f4"/><text x="6" y="9" class="rv">R</text><text x="5.500" y="13.500" class="rvt">RVT</text></svg></div>
        </div>
        <div class="tray">
            <svg viewBox="0 0 14 14"><path d="M4 9l3-3 3 3" stroke="#fff" stroke-width="1.200" fill="none"/></svg>
            <svg viewBox="0 0 14 14"><path d="M4 11q-3 0-3-2.500T4 6q1-3 4-2.500T11 6.500q2.500 0 2 2.500t-2 2z" fill="#d2d4d6"/><path d="M3 11 11 5" stroke="#898c90"/></svg>
            <svg viewBox="0 0 14 14"><path d="M4 11q-3 0-3-2.500T4 6q1-3 4-2.500T11 6.500q2.500 0 2 2.500t-2 2z" fill="#2689e0"/><path d="M4 11l7-4.500q2.500 0 2 2.500t-2 2z" fill="#5db8f6"/></svg>
            <svg viewBox="0 0 14 14"><rect x="5.500" y="1.500" width="3" height="7" rx="1.500" fill="#4b7a70" stroke="#b5d8cf" stroke-width=".9"/><path d="M3.500 6.500q0 4 3.500 4t3.500-4M7 10.500V13" stroke="#b5d8cf" fill="none"/></svg>
            <svg viewBox="0 0 14 14" fill="none" stroke="#fff"><path d="M2 6q5-4.500 10 0M3.700 8q3.300-3 6.600 0M5.300 9.700q1.700-1.500 3.400 0"/><circle cx="7" cy="10.800" r=".7" fill="#fff"/></svg>
            <svg viewBox="0 0 14 14" fill="none" stroke="#fff"><path d="M2 5.500h2.500L7.500 3v8.500l-3-2.500H2z"/><path d="M9.500 5.500q1 1.700 0 3.500"/><path d="M11.500 4q2 3 0 6.500" stroke="#777"/></svg>
            <svg viewBox="0 0 14 14"><rect x="2" y="4.500" width="10" height="6.500" rx="1.500" fill="#fff"/><path d="M13 6.500v3" stroke="#fff"/><path d="M2.500 1.500v3M4.500 1.500v3" stroke="#fff" stroke-width=".8"/><path d="M1 4h5v2.500l-2.500 1L1 6.500z" stroke="#1c1c1c" fill="#fff" stroke-width=".7"/></svg>
        </div>
        <div class="clock">18:11<br>13/02/2026</div>
    </div>
</body>
</html>
```

FILE: styles.css
```css
* {
    box-sizing: border-box;
}

body {
    margin: 0;
    width: 1280px;
    height: 720px;
    overflow: hidden;
    display: flex;
    flex-direction: column;
    font-family: "Open Sans", "Noto Sans", sans-serif;
    font-size: 8.400px;
    line-height: 10px;
    letter-spacing: -0.32px;
    color: #e0e3e7;
    background: #3b444f;
}

svg {
    display: block;
    flex: none;
    overflow: visible;
}

.defs {
    width: 0;
    height: 0;
    position: absolute;
}

.caret {
    width: 6px;
    height: 4px;
    color: #cdd2d7;
}

.x {
    width: 8px;
    height: 8px;
    color: #c9ced4;
}

.light {
    color: #e4e6e8;
}

.sep {
    width: 1px;
    height: 14px;
    background: #3a424c;
}

/* Barra de título */
.titlebar {
    flex: none;
    height: 17px;
    display: flex;
    background: #212830;
}

.qat {
    width: 387px;
    height: 16px;
    display: grid;
    grid-template-columns: 16px 16px 22px 13px 17px 6px 19px 5px 18px 7px 17px 15px 5px 16px 4px 17px 6px 19px 14px 16px 6px 16px 7px 16px 16px 4px 17px 16px 5px 16px;
    justify-items: center;
    align-items: center;
}

.qat svg:not(.caret) {
    width: 12px;
    height: 12px;
}

.app-title {
    width: 651px;
    padding-left: 201px;
    padding-top: 1px;
    line-height: 12px;
    letter-spacing: -0.31px;
}

.account {
    width: 242px;
    display: grid;
    grid-template-columns: 15px 11px 18px 49px 20px 10px 11px 13px 11px 49px 20px 15px;
    justify-items: center;
    align-items: center;
    line-height: 16px;
}

.account span {
    justify-self: start;
    padding-left: 1px;
    white-space: nowrap;
}

.account svg:not(.caret) {
    width: 13px;
    height: 13px;
}

.account .minimize {
    justify-self: end;
}

.logo-r {
    font: bold 8px "Open Sans", sans-serif;
    fill: #fff;
}

/* Pestañas de la cinta */
.tabs {
    flex: none;
    height: 17px;
    padding-top: 2px;
    display: flex;
    background: #212830;
    border-bottom: 1px solid #4a9420;
}

.tab {
    height: 14px;
    line-height: 13px;
    text-align: center;
    white-space: nowrap;
}

.file { width: 39px; background: #1f7bb0; color: #fff; }
.t-crear { width: 36px; }
.t-insertar { width: 35px; }
.t-anotar { width: 43px; margin-left: -1px; }
.t-vista { width: 24px; }
.t-gestionar { width: 53px; }
.t-comp { width: 62px; }
.t-enscape { width: 53px; }
.t-pyrevit { width: 36px; }
.t-eftools { width: 46px; }
.context { width: 76px; background: #37920d; color: #fff; }

.tab-toggle {
    display: flex;
    align-items: center;
    gap: 3px;
    padding-left: 16px;
}

/* Cinta */
.ribbon {
    flex: none;
    height: 62px;
    display: flex;
    background: #46524f;
}

.panel {
    display: flex;
    flex-direction: column;
    background: #3b444f;
    border-right: 1px solid #343d47;
}

.panel-body {
    height: 49px;
    display: flex;
}

.caption {
    height: 13px;
    padding-bottom: 2px;
    display: flex;
    justify-content: center;
    align-items: center;
    gap: 3px;
    white-space: nowrap;
}

.p-select { width: 57px; }
.p-props { width: 55px; }
.p-clip { width: 54px; }
.p-geo { width: 81px; }
.p-ctrl { width: 42px; }
.p-modify { width: 158px; }
.p-measure { width: 38px; }
.p-create { width: 28px; }
.p-mode { width: 103px; border: 0; }
.p-family { width: 102px; border: 0; }
.p-mode .caption { background: #445050; }
.p-family .caption { background: #3a5170; }

.big-btn {
    display: flex;
    flex-direction: column;
    align-items: center;
    gap: 1px;
    padding-top: 2px;
    height: 47px;
    margin-top: 1px;
    text-align: center;
    white-space: nowrap;
}

.p-select .big-btn {
    width: 38px;
    margin-left: 10px;
}

.big-btn.active {
    background: #34566a;
    border: 1px solid #3f6a80;
    padding-top: 1px;
}

.p-clip .big-btn {
    width: 38px;
}

.big-btn.disabled {
    color: #727a84;
}

.p-ctrl .big-btn {
    width: 41px;
}

.b-edit { width: 37px; }
.b-vis { width: 59px; }
.b-load { width: 38px; }
.b-loadclose { width: 63px; }

.grid-2 {
    display: grid;
    grid-template-columns: 26px 26px;
    grid-template-rows: 24px 23px;
    padding: 1px 0 0 1px;
    justify-items: center;
    align-items: center;
}

.stack-3 {
    display: flex;
    flex-direction: column;
    gap: 4px;
    padding: 3px 0 0 1px;
}

.geo {
    display: grid;
    grid-template-columns: 13px 27px 11px 20px;
    grid-template-rows: 16px 16px;
    padding: 9px 0 0 6px;
    align-items: center;
}

.geo span {
    padding-left: 1px;
}

.pair {
    display: flex;
    align-items: center;
    gap: 3px;
}

.geo .unir-caret {
    margin-left: -7px;
}

.mod-big {
    display: grid;
    grid-template-columns: repeat(4, 26.300px);
    grid-template-rows: 24px 24px;
    padding: 1px 0 0 1px;
    justify-items: center;
    align-items: center;
}

.mod-small {
    display: grid;
    grid-template-columns: repeat(3, 17px);
    grid-template-rows: repeat(3, 15.700px);
    padding: 1px 0 0;
    justify-items: center;
    align-items: center;
}

.mod-small svg {
    width: 12px;
    height: 12px;
}

.measure {
    display: grid;
    grid-template-columns: 22px 8px;
    grid-template-rows: 25px 23px;
    padding-left: 5px;
    align-items: center;
    justify-content: start;
}

.col {
    flex-direction: column;
    align-items: center;
    padding: 2px 0 0 1px;
    gap: 2px;
}

.options-bar {
    flex: none;
    height: 19px;
    padding-left: 5px;
    line-height: 17px;
    background: #46524f;
    border-top: 1px solid #333e41;
    letter-spacing: -0.3px;
    color: #d5dadb;
}

/* Zona de trabajo */
.workspace {
    flex: none;
    height: 557px;
    display: flex;
    background: #28303a;
}

.dock-title {
    height: 12px;
    padding: 0 1px;
    display: flex;
    justify-content: space-between;
    align-items: center;
    background: #212830;
}

.browser {
    width: 197px;
    background: #3b444f;
}

.browser .dock-title {
    padding-right: 2px;
    letter-spacing: -0.32px;
}

.search {
    height: 15px;
    margin: 6px 7px 6px 6px;
    padding-left: 5px;
    display: flex;
    align-items: center;
    gap: 5px;
    background: #2e3641;
    color: #9aa2ab;
}

.tree {
    margin: 0;
    padding: 0 3px 0 2px;
    list-style: none;
}

.tree li {
    height: 13.350px;
    display: flex;
    align-items: center;
    position: relative;
    white-space: nowrap;
}

.tw {
    width: 13px;
    padding-left: 1px;
    font: bold 10px/12px "Open Sans", sans-serif;
    color: #b9bfc6;
}

.ti {
    width: 11px;
    height: 11px;
    margin-right: 3px;
}

.tree .l2 {
    margin-left: 4px;
    padding-left: 7px;
    border-left: 1px dotted #5b646f;
}

.tree .l2 .tw {
    width: 12px;
}

.tree .last {
    border-left-color: transparent;
}

.tree .l3 {
    padding-left: 34px;
}

.tree .selected {
    background: #2e3641;
    font-weight: bold;
    color: #fff;
}

.view {
    width: 886px;
    margin-left: 2px;
    display: flex;
    flex-direction: column;
}

.view-tabs {
    height: 14px;
    display: flex;
    align-items: center;
    background: #454d60;
}

.vtab {
    height: 14px;
    padding-left: 3px;
    padding-top: 1px;
    display: flex;
    align-items: center;
    gap: 5px;
    white-space: nowrap;
}

.vtab svg {
    width: 10px;
    height: 10px;
    color: #858c98;
}

.v1 { width: 85px; }
.v2 { width: 85px; }
.v3 { width: 100px; }

.v4 {
    width: 86px;
    background: #212830;
    font-weight: bold;
    color: #fff;
}

.v4 svg {
    color: #e4e6e8;
}

.v4 .x {
    width: 8px;
    height: 8px;
    margin-left: auto;
    margin-right: 4px;
}

.tabs-menu {
    margin-left: auto;
    margin-right: 4px;
}

.view-main {
    height: 530px;
    display: flex;
}

.canvas {
    width: 872px;
    position: relative;
    background: #fff;
}

.model {
    width: 872px;
    height: 529px;
    margin-top: 1px;
}

.viewcube {
    position: absolute;
    right: 10px;
    top: 12px;
}

.cube-text {
    font: bold 5.500px "Liberation Sans", sans-serif;
    letter-spacing: 0;
    fill: #8c8f92;
    text-anchor: middle;
}

.navbar {
    position: absolute;
    right: 0;
    top: 81px;
}

.vscroll {
    width: 13px;
    display: flex;
    flex-direction: column;
    align-items: center;
    padding: 3px 2px 1px 0;
    background: #303844;
}

.thumb {
    width: 5px;
    height: 12px;
    margin: 251px 0 auto;
    border-radius: 2px;
    background: #8b939d;
}

.view-bar {
    height: 12px;
    display: flex;
    align-items: center;
    background: #303a44;
}

.scale {
    width: 54px;
    padding-left: 18px;
    letter-spacing: -0.2px;
}

.vb-icons {
    display: flex;
    gap: 6.350px;
    padding-left: 3px;
}

.vb-icons svg {
    width: 11px;
    height: 11px;
}

.view-bar .first {
    margin-left: 6px;
}

.hthumb {
    width: 12px;
    height: 6px;
    margin: 0 328px 0 326px;
    border-radius: 2px;
    background: #8b939d;
}

.grip {
    margin-left: 7px;
}

/* Propiedades */
.props {
    width: 194px;
    margin-left: 1px;
    display: flex;
    flex-direction: column;
    background: #3b444f;
}

.props .dock-title {
    padding-right: 0;
}

.type-box {
    height: 48px;
    padding: 1px 5px 0 4px;
    display: flex;
    align-items: center;
    justify-content: space-between;
}

.type-r {
    font: bold 22px "Open Sans", sans-serif;
    fill: #fff;
}

.type-box .caret {
    color: #8b939d;
}

.type-row {
    height: 17px;
    display: flex;
    line-height: 16px;
}

.type-select {
    width: 135px;
    padding: 0 3px;
    display: flex;
    justify-content: space-between;
    align-items: center;
    border-bottom: 1px solid #75828f;
}

.type-edit {
    width: 59px;
    padding-left: 4px;
    display: flex;
    align-items: center;
    gap: 2px;
    white-space: nowrap;
    background: #303843;
    color: #838b95;
}

.prop-list {
    padding-top: 3px;
}

.group {
    height: 12px;
    padding: 0 4px 1px 2px;
    display: flex;
    justify-content: space-between;
    align-items: center;
    background: #212830;
    font-weight: bold;
    letter-spacing: -0.36px;
    color: #fff;
}

.group svg {
    width: 6px;
    height: 8px;
}

.row {
    height: 12px;
    display: grid;
    grid-template-columns: 87px 92px 6px;
    column-gap: 1px;
    padding-left: 6px;
    align-items: center;
    white-space: nowrap;
    letter-spacing: -0.25px;
}

.field {
    height: 10px;
    padding-left: 1px;
    display: flex;
    align-items: center;
}

.box {
    border: 1px solid #96a0ab;
    background: #303843;
}

.btn {
    height: 10px;
    justify-content: center;
    border: 1px solid #5c6672;
    background: #39424e;
}

.off {
    color: #7b848e;
}

.chk {
    width: 7px;
    height: 7px;
    margin-left: 2px;
    border: 1px solid #a0a8b0;
}

.chk.on {
    margin-left: 1px;
    background: #aeb4ba;
}

.chk.on::before {
    content: "";
    display: block;
    width: 4px;
    height: 2px;
    margin: 1px;
    border-left: 1px solid #28303a;
    border-bottom: 1px solid #28303a;
    transform: rotate(-45deg);
}

.assoc {
    height: 10px;
    border: 1px solid #67717c;
}

.props-foot {
    height: 17px;
    margin-top: auto;
    padding: 0 2px;
    display: flex;
    align-items: center;
    gap: 2px;
    background: #303843;
}

.props-foot svg {
    width: 14px;
    height: 14px;
    background: #36404b;
}

.props-foot .on {
    background: #2b6e80;
}

.apply {
    width: 47px;
    height: 13px;
    margin-left: auto;
    line-height: 11px;
    text-align: center;
    letter-spacing: -0.1px;
    border: 1px solid #48525d;
    color: #7e8791;
}

/* Barra de estado */
.status {
    flex: none;
    height: 16px;
    padding-left: 1px;
    display: flex;
    justify-content: space-between;
    line-height: 16px;
    background: #3b444f;
}

.sel-tools {
    width: 172px;
    display: grid;
    grid-template-columns: 17px 17px 17px 18px 17px 18px 22px;
    justify-items: center;
    align-items: center;
}

.sel-tools > svg {
    width: 13px;
    height: 13px;
}

.filter {
    display: flex;
    align-items: center;
}

/* Barra de tareas */
.taskbar {
    flex: none;
    height: 32px;
    display: flex;
    align-items: center;
    background: #1c1c1c;
}

.apps {
    margin-left: 500px;
    display: grid;
    grid-template-columns: repeat(9, 29.350px) 16px;
    align-items: center;
}

.apps svg {
    width: 16px;
    height: 16px;
}

.app {
    width: 16px;
    position: relative;
}

.run::after {
    content: "";
    position: absolute;
    left: 6px;
    bottom: -5px;
    width: 4px;
    height: 2px;
    border-radius: 1px;
    background: #9a9a9a;
}

.focus {
    border-radius: 2px;
    box-shadow: 0 0 0 5px #292b2d;
    background: #292b2d;
}

.focus::after {
    left: 3px;
    width: 10px;
    background: #8ad2da;
}

.cal {
    font: bold 7px "Open Sans", sans-serif;
    fill: #3b78d8;
}

.rv {
    font: bold 8px "Open Sans", sans-serif;
    fill: #fff;
}

.rvt {
    font: bold 3.500px "Open Sans", sans-serif;
    letter-spacing: 0;
    fill: #fff;
}

.tray {
    margin-left: 302px;
    display: grid;
    grid-template-columns: 20px 22px 21px 22px 19px 15px 17px;
    justify-items: center;
}

.tray svg {
    width: 14px;
    height: 14px;
}

.clock {
    width: 49px;
    text-align: right;
    line-height: 10.500px;
    letter-spacing: -0.2px;
    color: #fff;
}
```
